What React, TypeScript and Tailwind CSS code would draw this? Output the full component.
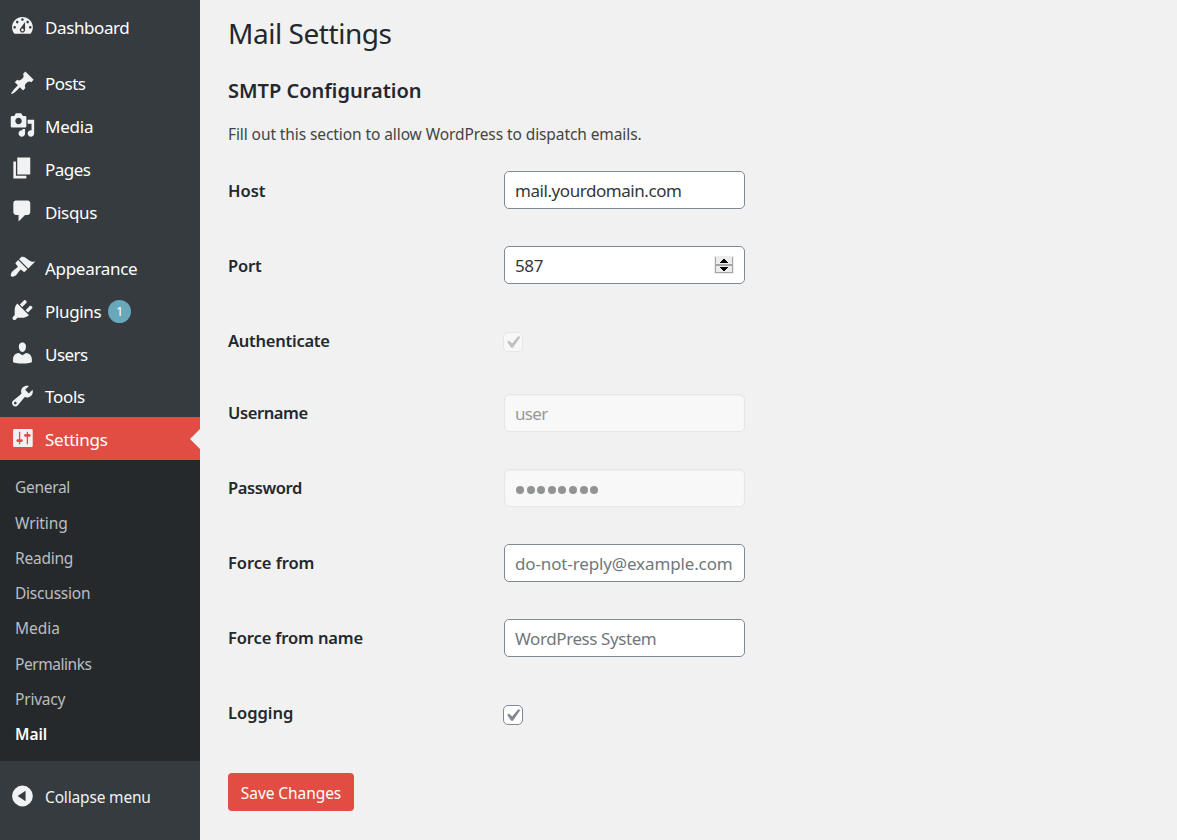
import type { ReactNode } from "react";

const icons = {
  dashboard:
    "M3.76 16h12.48c1.1-1.37 1.76-3.11 1.76-5 0-4.42-3.58-8-8-8s-8 3.58-8 8c0 1.89.66 3.63 1.76 5zM10 4c.55 0 1 .45 1 1s-.45 1-1 1-1-.45-1-1 .45-1 1-1zM6 6c.55 0 1 .45 1 1s-.45 1-1 1-1-.45-1-1 .45-1 1-1zm8 0c.55 0 1 .45 1 1s-.45 1-1 1-1-.45-1-1 .45-1 1-1zm-5.37 5.55L12 7v6c0 1.1-.9 2-2 2s-2-.9-2-2c0-.57.24-1.08.63-1.45zM4 10c.55 0 1 .45 1 1s-.45 1-1 1-1-.45-1-1 .45-1 1-1zm12 0c.55 0 1 .45 1 1s-.45 1-1 1-1-.45-1-1 .45-1 1-1zm-5 3c0-.55-.45-1-1-1s-1 .45-1 1 .45 1 1 1 1-.45 1-1z",
  post: "M10.44 3.02l1.82-1.82 6.36 6.35-1.83 1.82c-1.05-.68-2.48-.57-3.41.36l-.75.75c-.92.93-1.04 2.35-.35 3.41l-1.83 1.82-2.41-2.41-2.8 2.79c-.42.42-3.38 2.71-3.8 2.29s1.86-3.39 2.28-3.81l2.79-2.79L4.1 9.36l1.83-1.82c1.05.69 2.48.57 3.4-.36l.75-.75c.93-.92 1.05-2.35.36-3.41z",
  media:
    "M13 11V4c0-.55-.45-1-1-1h-1.67L9 1H5L3.67 3H2c-.55 0-1 .45-1 1v7c0 .55.45 1 1 1h10c.55 0 1-.45 1-1zM7 4.5c1.38 0 2.5 1.12 2.5 2.5S8.38 9.5 7 9.5 4.5 8.38 4.5 7 5.62 4.5 7 4.5zM14 6h5v10.5c0 1.38-1.12 2.5-2.5 2.5S14 17.88 14 16.5s1.12-2.5 2.5-2.5c.17 0 .34.02.5.05V9h-3V6zm-4 8.05V13h2v3.5c0 1.38-1.12 2.5-2.5 2.5S7 17.88 7 16.5 8.12 14 9.5 14c.17 0 .34.02.5.05z",
  page: "M6 15V2h10v13H6zm-1 1h8v2H3V5h2v11z",
  comment:
    "M5 2h9c1.1 0 2 .9 2 2v7c0 1.1-.9 2-2 2h-2l-5 5v-5H5c-1.1 0-2-.9-2-2V4c0-1.1.9-2 2-2z",
  appearance:
    "M14.48 11.06L7.41 3.99l1.5-1.5c.5-.56 2.3-.47 3.51.32 1.21.8 1.43 1.28 2.91 2.1 1.18.64 2.45 1.26 4.45.85zm-.71.71L6.7 4.7 4.93 6.47c-.39.39-.39 1.02 0 1.41l1.06 1.06c.39.39.39 1.03 0 1.42-.6.6-1.43 1.11-2.21 1.69-.35.26-.7.53-1.01.84C1.43 14.23.4 16.08 1.4 17.07c.99 1 2.84-.03 4.18-1.36.31-.31.58-.66.85-1.02.57-.78 1.08-1.61 1.69-2.21.39-.39 1.02-.39 1.41 0l1.06 1.06c.39.39 1.02.39 1.41 0z",
  plugin:
    "M13.11 4.36L9.87 7.6 8 5.73l3.24-3.24c.35-.34 1.05-.2 1.56.32.52.51.66 1.21.31 1.55zm-8 1.77l.91-1.12 9.01 9.01-1.19.84c-.71.71-2.63 1.16-3.82 1.16H6.14L4.9 17.26c-.59.59-1.54.59-2.12 0-.59-.58-.59-1.53 0-2.12l1.24-1.24v-3.88c0-1.13.4-3.19 1.09-3.89zm7.26 3.97l3.24-3.24c.34-.35 1.04-.21 1.55.31.52.51.66 1.21.31 1.55l-3.24 3.25z",
  user: "M10 9.25c-2.27 0-2.73-3.44-2.73-3.44C7 4.02 7.82 2 9.97 2c2.16 0 2.98 2.02 2.71 3.81 0 0-.41 3.44-2.68 3.44zm0 2.57L12.72 10c2.39 0 4.52 2.33 4.52 4.53v2.49s-3.65 1.13-7.24 1.13c-3.65 0-7.24-1.13-7.24-1.13v-2.49c0-2.25 1.94-4.48 4.47-4.48z",
  tool: "M16.68 9.77c-1.34 1.34-3.3 1.67-4.95.99l-5.41 6.52c-.99.99-2.59.99-3.58 0s-.99-2.59 0-3.57l6.52-5.42c-.68-1.65-.35-3.61.99-4.95 1.28-1.28 3.12-1.62 4.72-1.06l-2.89 2.89 2.82 2.82 2.86-2.87c.53 1.58.18 3.39-1.08 4.65zM3.81 16.21c.4.39 1.04.39 1.43 0 .4-.4.4-1.04 0-1.43-.39-.4-1.03-.4-1.43 0-.39.39-.39 1.03 0 1.43z",
  settings:
    "M17.9 16V4c0-.55-.45-1-1-1H3.8c-.55 0-1 .45-1 1v12c0 .55.45 1 1 1h13.1c.55 0 1-.45 1-1zM8.3 11h1c.55 0 1 .45 1 1s-.45 1-1 1h-1v1.5c0 .28-.22.5-.5.5s-.5-.22-.5-.5V13h-1c-.55 0-1-.45-1-1s.45-1 1-1h1V5.5c0-.28.22-.5.5-.5s.5.22.5.5V11zm5-2h-1c-.55 0-1-.45-1-1s.45-1 1-1h1V5.5c0-.28.22-.5.5-.5s.5.22.5.5V7h1c.55 0 1 .45 1 1s-.45 1-1 1h-1v5.5c0 .28-.22.5-.5.5s-.5-.22-.5-.5V9z",
  collapse: "M10 2a8 8 0 1 0 0 16 8 8 0 0 0 0-16zm2.4 3.9v8.2L6.3 10z",
};

type IconName = keyof typeof icons;

function Icon({ name }: { name: IconName }) {
  return (
    <svg viewBox="-0.35 0 20 20" className="mr-[10px] size-[26px] shrink-0" fill="#f0f2f4" fillRule="evenodd">
      <path d={icons[name]} />
    </svg>
  );
}

interface MenuItemProps {
  icon: IconName;
  label: string;
  tracking: string;
  active?: boolean;
  children?: ReactNode;
}

function MenuItem({ icon, label, tracking, active = false, children }: MenuItemProps) {
  return (
    <li className={`relative flex h-[42.8px] items-center pl-[9px] text-[17px] text-white ${active ? "bg-[#e14d43]" : ""}`}>
      <Icon name={icon} />
      <span className={`mt-[3px] ${tracking}`}>{label}</span>
      {children}
      {active && (
        <span className="absolute right-0 mt-px h-0 w-0 border-y-[10px] border-r-[10px] border-y-transparent border-r-[#f1f1f1]" />
      )}
    </li>
  );
}

const submenu = [
  ["General", "tracking-[-0.3px]"],
  ["Writing", "tracking-[-0.1px]"],
  ["Reading", "tracking-[-0.22px]"],
  ["Discussion", "tracking-[-0.22px]"],
  ["Media", "tracking-[-0.05px]"],
  ["Permalinks", "tracking-[-0.45px]"],
  ["Privacy", "tracking-[-0.2px]"],
];

interface RowProps {
  label: string;
  tracking?: string;
  className?: string;
  labelPadding?: string;
  children: ReactNode;
}

function Row({ label, tracking = "", className = "h-[75px]", labelPadding = "pt-[7px]", children }: RowProps) {
  return (
    <div className={`flex items-start ${className}`}>
      <div className={`w-[276px] text-[16.5px] leading-[24px] font-semibold text-[#23282d] ${labelPadding}`}>
        <span className={tracking}>{label}</span>
      </div>
      {children}
    </div>
  );
}

const box = "flex h-[38px] w-[241px] items-center rounded-[5px] border px-[10px] pt-[2px] text-[17px] whitespace-nowrap";
const field = `${box} border-[#7e8993] bg-white`;
const disabledField = `${box} border-[#e5e6e6] bg-[#f8f8f8] text-[#979899] shadow-[inset_0_1px_2px_rgba(0,0,0,0.04)]`;

function Check({ disabled = false }: { disabled?: boolean }) {
  return (
    <span
      className={`-ml-px flex size-5 items-center justify-center rounded-[5px] border ${
        disabled ? "border-[#e5e6e7] bg-[#f7f7f7]" : "border-[#7e8993] bg-white"
      }`}
    >
      <svg viewBox="0 0 20 20" className="mt-px mr-[2px] size-[25px] shrink-0" fill={disabled ? "#bcc1c5" : "#7e8993"}>
        <path d="M14.83 4.89l1.34.94-5.81 8.38H9.02L5.78 9.67l1.34-1.25 2.57 2.4z" />
      </svg>
    </span>
  );
}

export default function App() {
  return (
    <div className="flex h-[840px] w-[1177px] overflow-hidden bg-[#f1f1f1] font-['Noto_Sans',sans-serif]">
      <aside className="flex w-[200px] shrink-0 flex-col bg-[#363b3f]">
        <ul className="flex flex-col pt-[5px]">
          <MenuItem icon="dashboard" label="Dashboard" tracking="tracking-[-0.4px]" />
          <li className="h-[13.4px]" />
          <MenuItem icon="post" label="Posts" tracking="tracking-[-0.5px]" />
          <MenuItem icon="media" label="Media" tracking="tracking-[-0.2px]" />
          <MenuItem icon="page" label="Pages" tracking="tracking-[-0.55px]" />
          <MenuItem icon="comment" label="Disqus" tracking="tracking-[-0.35px]" />
          <li className="h-[13.4px]" />
          <MenuItem icon="appearance" label="Appearance" tracking="tracking-[-0.3px]" />
          <MenuItem icon="plugin" label="Plugins" tracking="tracking-[-0.35px]">
            <span className="mt-[3px] ml-[7px] flex size-[23px] items-center justify-center rounded-full bg-[#69a8bb] text-[13px]">
              1
            </span>
          </MenuItem>
          <MenuItem icon="user" label="Users" tracking="tracking-[-0.55px]" />
          <MenuItem icon="tool" label="Tools" tracking="tracking-[-0.3px]" />
          <MenuItem icon="settings" label="Settings" tracking="tracking-[-0.27px]" active />
        </ul>
        <ul className="flex h-[301px] flex-col bg-[#26292c] pt-[10.5px] pl-[15px] text-[15.5px] leading-[35.3px] text-[#bcbebf]">
          {submenu.map(([label, tracking]) => (
            <li key={label}>
              <span className={tracking}>{label}</span>
            </li>
          ))}
          <li className="font-semibold text-white">Mail</li>
        </ul>
        <div className="flex h-[70px] items-center pl-[9px] text-[15.5px] text-[#f0f2f4]">
          <Icon name="collapse" />
          <span className="mt-[3px] tracking-[-0.17px]">Collapse menu</span>
        </div>
      </aside>
      <main className="flex flex-col items-start pl-[28px] text-[#23282d]">
        <h1 className="mt-[13px] text-[28px] leading-[40px] tracking-[-0.45px]">Mail Settings</h1>
        <h2 className="mt-[23px] text-[20px] leading-[30px] font-semibold">SMTP Configuration</h2>
        <p className="mt-[16px] text-[15.5px] leading-[24px] tracking-[-0.09px] text-[#444]">
          Fill out this section to allow WordPress to dispatch emails.
        </p>
        <div className="mt-[25px] flex flex-col">
          <Row label="Host" labelPadding="pt-[8px]">
            <div className={`${field} tracking-[-0.44px] text-[#32373c]`}>mail.yourdomain.com</div>
          </Row>
          <Row label="Port" tracking="tracking-[-0.2px]" labelPadding="pt-[8px]">
            <div className={`${field} justify-between text-[#32373c]`}>
              <span className="tracking-[-0.35px]">587</span>
              <svg viewBox="0 0 20 18" className="mb-[2px] h-[18px] w-5" shapeRendering="crispEdges">
                <path fill="#ececec" d="M0 0h20v18H0z" />
                <path fill="#a5a5a5" d="M1 1h1v16H1zM18 1h1v16h-1zM1 8h18v2H1zM1 16h18v1H1z" />
                <path fill="#000" d="M9 3h2v1h1v1h1v1h1v1H6V6h1V5h1V4h1zM6 11h8v1h-1v1h-1v1h-1v1H9v-1H8v-1H7v-1H6z" />
              </svg>
            </div>
          </Row>
          <Row label="Authenticate" tracking="tracking-[-0.25px]" className="h-[73px]" labelPadding="pt-[8px]">
            <div className="pt-[11px]">
              <Check disabled />
            </div>
          </Row>
          <Row label="Username" tracking="tracking-[-0.4px]">
            <div className={`${disabledField} tracking-[-0.7px]`}>user</div>
          </Row>
          <Row label="Password" tracking="tracking-[-0.4px]">
            <div className={disabledField}>
              <span className="flex gap-[2.6px] pt-px pl-px">
                {Array.from({ length: 8 }, (_, i) => (
                  <i key={i} className="size-2 rounded-full bg-[#929394]" />
                ))}
              </span>
            </div>
          </Row>
          <Row label="Force from" tracking="tracking-[-0.08px]">
            <div className={`${field} tracking-[-0.13px] text-[#72777c]`}>do-not-reply@example.com</div>
          </Row>
          <Row label="Force from name" tracking="tracking-[-0.13px]">
            <div className={`${field} tracking-[-0.41px] text-[#72777c]`}>WordPress System</div>
          </Row>
          <Row label="Logging">
            <div className="pt-[11px]">
              <Check />
            </div>
          </Row>
        </div>
        <button className="mt-[4px] h-[38px] w-[126px] rounded-[4px] bg-[#e14d43] pt-[3px] text-[15.5px] tracking-[-0.07px] text-white">
          Save Changes
        </button>
      </main>
    </div>
  );
}
